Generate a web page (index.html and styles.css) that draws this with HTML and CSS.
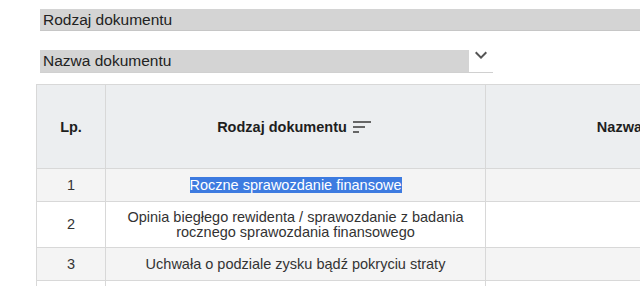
FILE: index.html
```html
<!DOCTYPE html>
<html lang="pl">
<head>
    <meta charset="UTF-8">
    <meta name="viewport" content="width=device-width, initial-scale=1.0">
    <title>Dokumenty</title>
    <link rel="stylesheet" href="styles.css">
</head>
<body>
    <div class="filters">
        <div class="field field-wide">Rodzaj dokumentu</div>
        <div class="select">
            <div class="field field-name">Nazwa dokumentu</div>
            <svg class="chevron" viewBox="0 4 24 16" width="24" height="16">
                <path d="M16.59 8.59L12 13.17 7.41 8.59 6 10l6 6 6-6z" fill="#555"/>
            </svg>
        </div>
    </div>

    <table class="docs">
        <thead>
            <tr>
                <th class="col-lp">Lp.</th>
                <th class="col-type">
                    <span class="th-inner">Rodzaj dokumentu
                        <svg class="sort" viewBox="0 0 24 24" width="24" height="24">
                            <path d="M3 18h6v-2H3v2zM3 6v2h18V6H3zm0 7h12v-2H3v2z" fill="#666"/>
                        </svg>
                    </span>
                </th>
                <th class="col-name">Nazwa dokumentu</th>
            </tr>
        </thead>
        <tbody>
            <tr class="row-odd">
                <td>1</td>
                <td><span class="selected">Roczne sprawozdanie finansowe</span></td>
                <td></td>
            </tr>
            <tr class="row-even">
                <td>2</td>
                <td>Opinia biegłego rewidenta / sprawozdanie z badania rocznego sprawozdania finansowego</td>
                <td></td>
            </tr>
            <tr class="row-odd">
                <td>3</td>
                <td>Uchwała o podziale zysku bądź pokryciu straty</td>
                <td></td>
            </tr>
            <tr class="row-even">
                <td></td>
                <td></td>
                <td></td>
            </tr>
        </tbody>
    </table>
</body>
</html>
```

FILE: styles.css
```css
/* podstawowe ustawienia */
body {
    margin: 0;
    font-family: "Liberation Sans", Arial, sans-serif;
    color: #333;
    background-color: #fff;
    overflow: hidden;
}

.filters {
    padding: 9px 0 0 40px;
}

.field {
    height: 22px;
    line-height: 22px;
    padding-left: 3px;
    font-size: 15.5px;
    color: #222;
    background-color: #d4d4d4;
    border-bottom: 1px solid #c6c6c6;
    box-sizing: border-box;
    white-space: nowrap;
}

.field-wide {
    width: 720px;
}

.select {
    display: flex;
    width: 453px;
    margin-top: 19px;
    border-bottom: 1px solid #d0d0d0;
}

.field-name {
    width: 429px;
    border-bottom: none;
}

.chevron {
    margin-top: -3px;
    flex-shrink: 0;
}

/* tabela */
.docs {
    margin: 11px 0 0 36px;
    border-collapse: collapse;
    table-layout: fixed;
    width: 800px;
    font-size: 14.5px;
}

.docs th,
.docs td {
    border: 1px solid #d8d8d8;
    text-align: center;
    padding: 0 8px;
}

.docs th {
    height: 83px;
    background-color: #eceef0;
    color: #1e1e1e;
    font-weight: bold;
}

.col-lp {
    width: 52px;
}

.col-type {
    width: 363px;
}

.th-inner {
    display: inline-flex;
    align-items: center;
    gap: 3px;
}

.sort {
    flex-shrink: 0;
}

.docs td {
    line-height: 15px;
}

.row-odd td {
    height: 32px;
    background-color: #f4f4f4;
}

.row-even td {
    height: 45px;
    background-color: #fff;
}

.selected {
    background-color: #3d7be0;
    color: #fff;
}
```
